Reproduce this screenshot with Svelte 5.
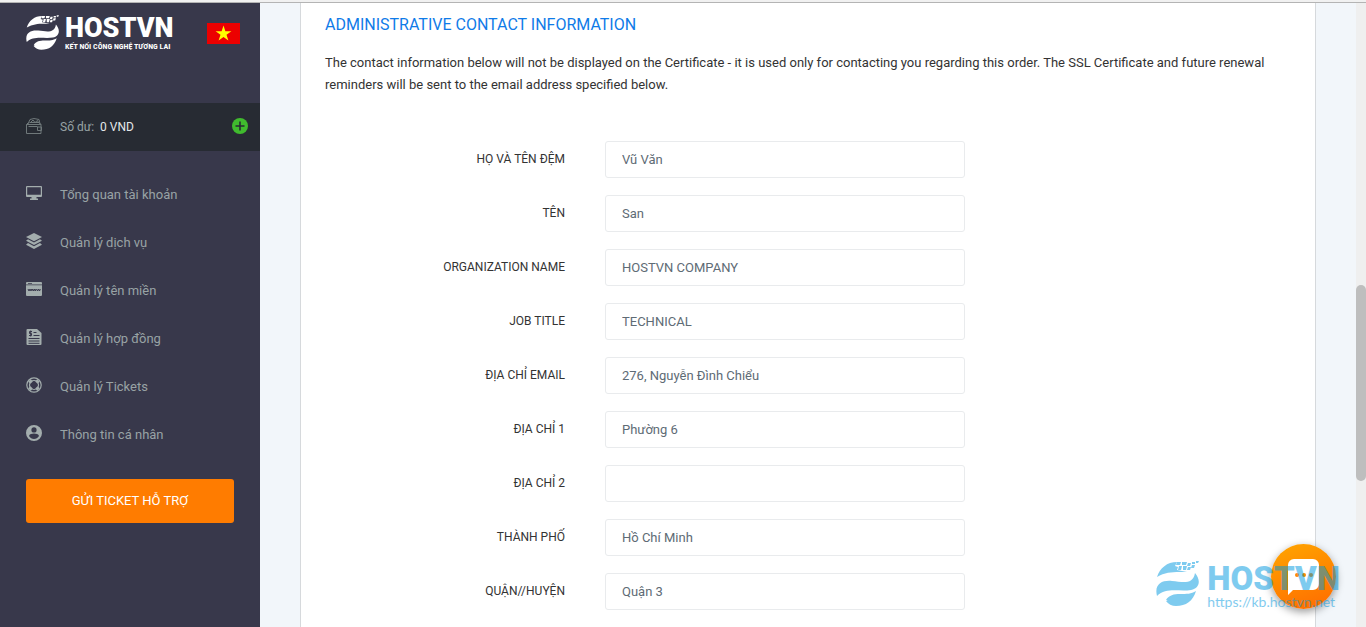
<script lang="ts">
  interface Field {
    id: string;
    label: string;
    value: string;
  }

  interface MenuItem {
    icon: string;
    label: string;
  }

  const menu: MenuItem[] = [
    { icon: 'monitor', label: 'Tổng quan tài khoản' },
    { icon: 'layers', label: 'Quản lý dịch vụ' },
    { icon: 'domain', label: 'Quản lý tên miền' },
    { icon: 'contract', label: 'Quản lý hợp đồng' },
    { icon: 'support', label: 'Quản lý Tickets' },
    { icon: 'user', label: 'Thông tin cá nhân' }
  ];

  let fields: Field[] = $state([
    { id: 'firstname', label: 'Họ và tên đệm', value: 'Vũ Văn' },
    { id: 'lastname', label: 'Tên', value: 'San' },
    { id: 'orgname', label: 'Organization Name', value: 'HOSTVN COMPANY' },
    { id: 'jobtitle', label: 'Job Title', value: 'TECHNICAL' },
    { id: 'email', label: 'Địa chỉ Email', value: '276, Nguyễn Đình Chiểu' },
    { id: 'address1', label: 'Địa chỉ 1', value: 'Phường 6' },
    { id: 'address2', label: 'Địa chỉ 2', value: '' },
    { id: 'city', label: 'Thành phố', value: 'Hồ Chí Minh' },
    { id: 'state', label: 'Quận//Huyện', value: 'Quận 3' }
  ]);
</script>

{#snippet globe()}
  <svg class="globe" viewBox="0 0 43 45" aria-hidden="true">
    <path d="M1 16C4 7 11 1 21 1l-2 4 3 1-1 3 10 2c-11 0-20-1-30 5z" />
    <path d="M21 1h4l-1 3h-4zM26 1h5l-1 3h-4zM32 2h3l-1 3h-3zM36 1h3v2h-3zM40 0h3l-1 2h-2zM23 5h3l-1 4h-3zM27 5h4l-1 4h-3zM32 6h3l-1 3h-3zM36 4h3l-1 3h-3z" />
    <path d="M1 35c-3-12 5-16 15-15 11 1 21 4 23-8 6 7 5 15-4 17-12 2-25-3-34 6z" />
    <path d="M10 39c3-5 8-6 14-6 7 0 11 0 16-3-3 10-10 15-20 15-4 0-8-2-10-5 2 0 2 0 0-1z" />
  </svg>
{/snippet}

{#snippet icon(name: string)}
  <svg class="icon" viewBox="0 0 16 16" aria-hidden="true">
    {#if name === 'monitor'}
      <path fill-rule="evenodd" d="M1 1h14a1 1 0 0 1 1 1v9a1 1 0 0 1-1 1h-4.500v1.500H12V15H4v-1.500h1.500V12H1a1 1 0 0 1-1-1V2a1 1 0 0 1 1-1zm.2 1.200v7.500h13.600V2.200z" />
    {:else if name === 'layers'}
      <path d="M8 0l8 4-8 4.200L0 4zM2 6.200l6 3.200 6-3.200L16 7.700l-8 4.200-8-4.200zM2 10l6 3.200 6-3.200 2 1.700L8 16l-8-4.300z" />
    {:else if name === 'domain'}
      <path fill-rule="evenodd" d="M1 1h14a1 1 0 0 1 1 1v1.500H0V2a1 1 0 0 1 1-1zm1 1v.8h4V2zM0 4.200h16V14a1 1 0 0 1-1 1H1a1 1 0 0 1-1-1z" />
      <path class="cut" d="M2 8l1 2 1-2 1 2 .8-2M6.200 8l1 2 1-2 1 2 .8-2M10.500 8l1 2 1-2 1 2 .8-2" />
    {:else if name === 'contract'}
      <path d="M2 0h9l4.500 4v11a1 1 0 0 1-1 1h-13a1 1 0 0 1-1-1V1a1 1 0 0 1 1-1z" />
      <path class="cut" d="M6 2.500H3.500v2h2v2H3M4.700 1.500v6M7.500 3.500h3M7.500 6.500h6M2.500 9.500h11M2.500 12h11M2.500 14.300h11" />
    {:else if name === 'support'}
      <circle class="line" cx="8" cy="8" r="7.200" />
      <circle class="line" cx="8" cy="8" r="4.500" />
      <path d="M2 4.800L4.800 2l2 2.400L4.400 6.800zM11.200 2L14 4.800l-2.400 2-2.400-2.400zM2 11.200L4.800 14l2-2.400-2.400-2.400zM14 11.200L11.200 14l-2-2.400 2.400-2.400z" />
    {:else if name === 'user'}
      <path fill-rule="evenodd" d="M8 0a8 8 0 1 1 0 16A8 8 0 0 1 8 0zm0 2.300a2.600 2.600 0 1 0 0 5.200 2.600 2.600 0 0 0 0-5.200zM3 11c1.200 2 3 3 5 3s3.800-1 5-3c-.2-1.600-3.200-2.400-5-2.400S3.200 9.400 3 11z" />
    {:else if name === 'wallet'}
      <path class="line" d="M.5 6.500h14.500v9H.5zM.5 6.500l2-2M15 6.500l-2-2M2 6l2-4.500 4-1 5 1 1 4.500M3.500 4.500h9.500M4 5l3-3 2 2.500 2.500-2 1 2.500M2.500 8.500h9M15.500 9h-4v3.500h4z" />
    {/if}
  </svg>
{/snippet}

<div class="window">
  <div class="topline"></div>
  <div class="page">
    <aside class="sidebar">
      <header class="brand">
        <a class="logo" href="#home">
          {@render globe()}
          <span class="logo-text">
            <strong>HOSTVN</strong>
            <small>KẾT NỐI CÔNG NGHỆ TƯƠNG LAI</small>
          </span>
        </a>
        <button class="flag" aria-label="Tiếng Việt">
          <svg viewBox="0 0 33 21" aria-hidden="true">
            <path d="M0 0h33v21H0z" fill="#ec0000" />
            <path d="M16.500 2.500l1.900 5.700h6l-4.900 3.600 1.900 5.700-4.900-3.500-4.900 3.500 1.900-5.700-4.900-3.600h6z" fill="#ff0" />
          </svg>
        </button>
      </header>

      <div class="balance">
        {@render icon('wallet')}
        <span>Số dư: <b>0 VND</b></span>
        <button class="add" aria-label="Nạp tiền">
          <svg viewBox="0 0 16 16" aria-hidden="true">
            <circle cx="8" cy="8" r="8" fill="#40bb2e" />
            <path d="M8 3.500v9M3.500 8h9" stroke="#272b33" stroke-width="1.600" />
          </svg>
        </button>
      </div>

      <nav class="menu">
        {#each menu as item}
          <a href="#{item.icon}">
            {@render icon(item.icon)}
            <span>{item.label}</span>
          </a>
        {/each}
      </nav>

      <button class="ticket">GỬI TICKET HỖ TRỢ</button>
    </aside>

    <main class="content">
      <section class="panel">
        <h2>Administrative Contact Information</h2>
        <p>
          The contact information below will not be displayed on the Certificate - it is used only for
          contacting you regarding this order. The SSL Certificate and future renewal reminders will be
          sent to the email address specified below.
        </p>

        <form>
          {#each fields as field}
            <div class="row">
              <label for={field.id}>{field.label}</label>
              <input id={field.id} type="text" bind:value={field.value} />
            </div>
          {/each}
        </form>
      </section>
    </main>

    <div class="scrollbar"><div class="thumb"></div></div>
  </div>

  <button class="chat" aria-label="Chat">
    <svg viewBox="0 0 31 36" aria-hidden="true">
      <path d="M6 0h19a6 6 0 0 1 6 6v19a6 6 0 0 1-6 6H5l-5 5V6a6 6 0 0 1 6-6z" fill="#fff" />
      <g fill="#ff8a00">
        <circle cx="9" cy="16" r="2" />
        <circle cx="16" cy="16" r="2" />
        <circle cx="23" cy="16" r="2" />
      </g>
    </svg>
  </button>

  <div class="watermark">
    {@render globe()}
    <span class="logo-text">
      <strong>HOSTVN</strong>
      <small>https://kb.hostvn.net</small>
    </span>
  </div>
</div>

<style>
  :global(body) {
    background: #f2f6fa;
    font-family: Roboto, "Liberation Sans", sans-serif;
    font-size: 13px;
    color: #333;
  }

  button,
  input {
    font: inherit;
    box-sizing: border-box;
  }

  button {
    border: 0;
    padding: 0;
    background: none;
    cursor: pointer;
  }

  a {
    color: inherit;
    text-decoration: none;
  }

  svg {
    display: block;
  }

  .window {
    position: relative;
    display: flex;
    flex-direction: column;
    min-height: 100vh;
  }

  .topline {
    height: 2px;
    background: #f1f1f1;
    border-bottom: 1px solid #b4b4b4;
  }

  .page {
    flex: 1;
    display: flex;
  }

  .sidebar {
    flex: 0 0 260px;
    background: #38384b;
    color: #98a3a5;
  }

  .brand {
    display: flex;
    align-items: flex-start;
    justify-content: space-between;
    box-sizing: border-box;
    height: 100px;
    padding: 12px 20px 0 26px;
  }

  .logo {
    display: flex;
    gap: 6px;
    color: #fff;
  }

  .globe {
    fill: currentColor;
  }

  .logo .globe {
    width: 33px;
    height: 35px;
  }

  .logo-text {
    display: flex;
    flex-direction: column;
    white-space: nowrap;
  }

  .logo-text strong {
    font-weight: 900;
    font-size: 27px;
    line-height: 27px;
  }

  .logo-text small {
    font-family: "Liberation Sans Narrow", "Roboto Condensed", "DejaVu Sans Condensed", sans-serif;
    font-weight: 700;
    font-size: 8px;
    line-height: 9px;
  }

  .flag {
    width: 33px;
    margin-top: 8px;
  }

  .balance {
    display: flex;
    align-items: center;
    height: 48px;
    padding: 0 12px 0 26px;
    background: #272b33;
    font-size: 12px;
  }

  .balance b {
    margin-left: 3px;
    font-weight: 400;
    color: #e4e8ea;
  }

  .add {
    width: 16px;
    margin-left: auto;
    margin-bottom: 2px;
  }

  .icon {
    width: 16px;
    height: 16px;
    margin: 0 18px 2px 0;
    fill: #a3adad;
  }

  .icon .line {
    fill: none;
    stroke: #a3adad;
    stroke-width: 1.2;
  }

  .balance .line {
    stroke: #6f787a;
    stroke-width: 1;
  }

  .icon .cut {
    fill: none;
    stroke: #38384b;
  }

  .menu {
    padding: 19px 26px 0;
  }

  .menu a {
    display: flex;
    align-items: center;
    height: 48px;
  }

  .ticket {
    display: block;
    width: 208px;
    height: 44px;
    margin: 21px 26px;
    padding-bottom: 2px;
    border-radius: 3px;
    background: #ff7c00;
    color: #fff;
  }

  .content {
    flex: 1;
    display: flex;
    padding: 0 40px;
  }

  .panel {
    flex: 1;
    padding: 11px 24px 0;
    background: #fff;
    border: solid #d6d9dc;
    border-width: 0 1px;
  }

  h2 {
    margin: 0 0 16px;
    font-size: 16px;
    line-height: 22px;
    font-weight: 400;
    text-transform: uppercase;
    color: #0f7be8;
  }

  p {
    margin: 0 0 45px;
    line-height: 22px;
  }

  .row {
    display: flex;
    align-items: center;
    gap: 40px;
    margin-bottom: 17px;
  }

  label {
    flex: 0 0 240px;
    padding-bottom: 2px;
    font-size: 12px;
    text-align: right;
    text-transform: uppercase;
  }

  input {
    width: 360px;
    height: 37px;
    padding: 0 16px;
    border: 1px solid #e9ebed;
    border-radius: 3px;
    background: #fff;
    color: #5e6b75;
  }

  .scrollbar {
    flex: 0 0 10px;
    padding-top: 282px;
    background: #efefef;
  }

  .thumb {
    height: 196px;
    border-radius: 5px;
    background: #bebebe;
  }

  .chat {
    position: absolute;
    right: 30px;
    bottom: 18px;
    display: flex;
    align-items: center;
    justify-content: center;
    width: 65px;
    height: 65px;
    border-radius: 50%;
    background: linear-gradient(160deg, #ffa600, #ff6a00);
    box-shadow: 0 3px 8px rgba(0, 0, 0, 0.4);
  }

  .chat svg {
    width: 31px;
    height: 36px;
  }

  .watermark {
    position: absolute;
    right: 26px;
    bottom: 21px;
    display: flex;
    gap: 8px;
    color: #0098e0;
    opacity: 0.5;
    pointer-events: none;
  }

  .watermark .globe {
    width: 43px;
    height: 45px;
  }

  .watermark strong {
    font-size: 33px;
    line-height: 36px;
  }

  .watermark small {
    font-family: Lato, sans-serif;
    font-weight: 400;
    font-size: 14px;
    line-height: 9px;
  }
</style>
